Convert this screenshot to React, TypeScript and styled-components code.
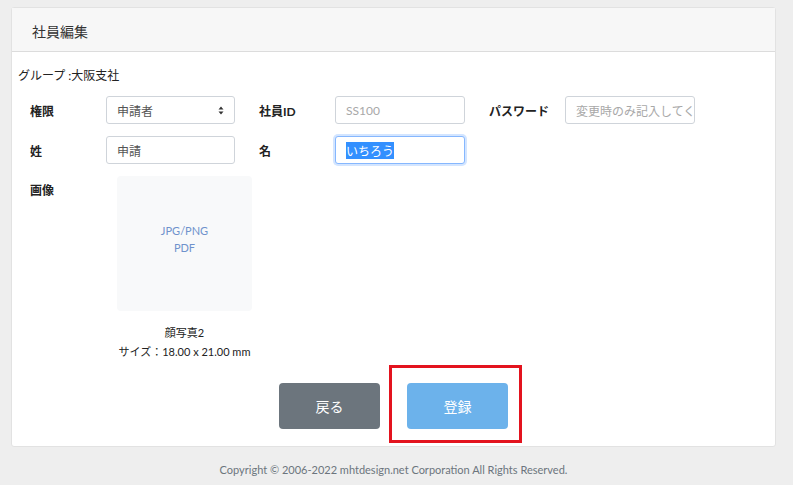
import * as React from 'react';
import styled, { createGlobalStyle } from 'styled-components';

const GlobalStyle = createGlobalStyle`
  html, body {
    margin: 0;
    padding: 0;
    background: #eeeeee;
    font-family: Lato, 'Noto Sans CJK JP', sans-serif;
    color: #222;
  }
  * { box-sizing: border-box; }
`;

const Page = styled.div`
  padding: 7px 17px 0 11px;
`;

const Card = styled.div`
  background: #fff;
  border: 1px solid #e2e2e2;
  border-radius: 3px;
  height: 440px;
  display: flex;
  flex-direction: column;
`;

const CardHeader = styled.div`
  height: 44px;
  background: #f7f7f7;
  border-bottom: 1px solid #dcdcdc;
  display: flex;
  align-items: center;
  padding: 3px 0 0 20px;
  font-size: 14px;
  color: #333;
`;

const CardBody = styled.div`
  padding: 16px 6px 0 6px;
  display: flex;
  flex-direction: column;
`;

const Group = styled.div`
  font-size: 12px;
  color: #222;
  line-height: 16px;
  margin-bottom: 12px;
`;

const Row = styled.div`
  display: flex;
  align-items: center;
  padding-left: 12px;
  margin-bottom: 12px;
  gap: 24px;
`;

const Field = styled.div`
  display: flex;
  align-items: center;
`;

const Label = styled.div`
  width: 76px;
  font-size: 12px;
  font-weight: 700;
  color: #222;
`;

const Input = styled.div<{ $focus?: boolean; $placeholder?: boolean }>`
  width: 130px;
  height: 28px;
  border: 1px solid ${(p) => (p.$focus ? '#86b7fe' : '#cfd4da')};
  box-shadow: ${(p) => (p.$focus ? '0 0 0 2px rgba(13,110,253,0.18)' : 'none')};
  border-radius: 3px;
  padding: 0 10px;
  display: flex;
  align-items: center;
  justify-content: space-between;
  font-size: 12px;
  color: ${(p) => (p.$placeholder ? '#a8a8a8' : '#555')};
  white-space: nowrap;
  overflow: hidden;
  background: #fff;
`;

const Selected = styled.span`
  background: #3390ff;
  color: #fff;
`;

const ImageRow = styled.div`
  display: flex;
  padding-left: 12px;
`;

const ImageLabel = styled(Label)`
  padding-top: 5px;
`;

const ImageCol = styled.div`
  margin-left: 11px;
  display: flex;
  flex-direction: column;
  align-items: center;
  width: 135px;
`;

const ImageBox = styled.div`
  width: 135px;
  height: 135px;
  background: #f8f9fa;
  border-radius: 4px;
  display: flex;
  flex-direction: column;
  align-items: center;
  justify-content: center;
  padding-bottom: 10px;
  font-size: 11px;
  line-height: 17px;
  color: #6f92cc;
`;

const Caption = styled.div`
  margin-top: 12px;
  font-size: 11px;
  line-height: 19px;
  text-align: center;
  white-space: nowrap;
  color: #222;
`;

const Buttons = styled.div`
  display: flex;
  justify-content: center;
  gap: 27px;
  margin-top: 22px;
`;

const Button = styled.button<{ $variant: 'back' | 'save' }>`
  width: 101px;
  height: 46px;
  border: none;
  border-radius: 4px;
  font-family: inherit;
  font-size: 14px;
  color: #fff;
  background: ${(p) => (p.$variant === 'back' ? '#6c757d' : '#6cb2eb')};
  position: relative;
`;

const Highlight = styled.span`
  position: absolute;
  left: -18px;
  top: -18px;
  right: -14px;
  bottom: -14px;
  border: 3px solid #e3131e;
  pointer-events: none;
`;

const Footer = styled.div`
  text-align: center;
  font-size: 11px;
  color: #6c757d;
  padding-top: 16px;
`;

const SelectArrow = () => (
  <svg width="6" height="9" viewBox="0 0 6 9">
    <path d="M3 0.5 L5.5 3.5 H0.5 Z M3 8.5 L5.5 5.5 H0.5 Z" fill="#333" />
  </svg>
);

export default function App() {
  return (
    <>
      <GlobalStyle />
      <Page>
        <Card>
          <CardHeader>社員編集</CardHeader>
          <CardBody>
            <Group>グループ :大阪支社</Group>
            <Row>
              <Field>
                <Label>権限</Label>
                <Input style={{ width: 129 }}>
                  申請者
                  <SelectArrow />
                </Input>
              </Field>
              <Field>
                <Label>社員ID</Label>
                <Input $placeholder>SS100</Input>
              </Field>
              <Field>
                <Label>パスワード</Label>
                <Input $placeholder>変更時のみ記入してく</Input>
              </Field>
            </Row>
            <Row>
              <Field>
                <Label>姓</Label>
                <Input style={{ width: 129 }}>申請</Input>
              </Field>
              <Field>
                <Label>名</Label>
                <Input $focus>
                  <Selected>いちろう</Selected>
                </Input>
              </Field>
            </Row>
            <ImageRow>
              <ImageLabel>画像</ImageLabel>
              <ImageCol>
                <ImageBox>
                  <div>JPG/PNG</div>
                  <div>PDF</div>
                </ImageBox>
                <Caption>
                  顔写真2
                  <br />
                  サイズ：18.00 x 21.00 mm
                </Caption>
              </ImageCol>
            </ImageRow>
            <Buttons>
              <Button $variant="back">戻る</Button>
              <Button $variant="save">
                登録
                <Highlight />
              </Button>
            </Buttons>
          </CardBody>
        </Card>
        <Footer>Copyright © 2006-2022 mhtdesign.net Corporation All Rights Reserved.</Footer>
      </Page>
    </>
  );
}
